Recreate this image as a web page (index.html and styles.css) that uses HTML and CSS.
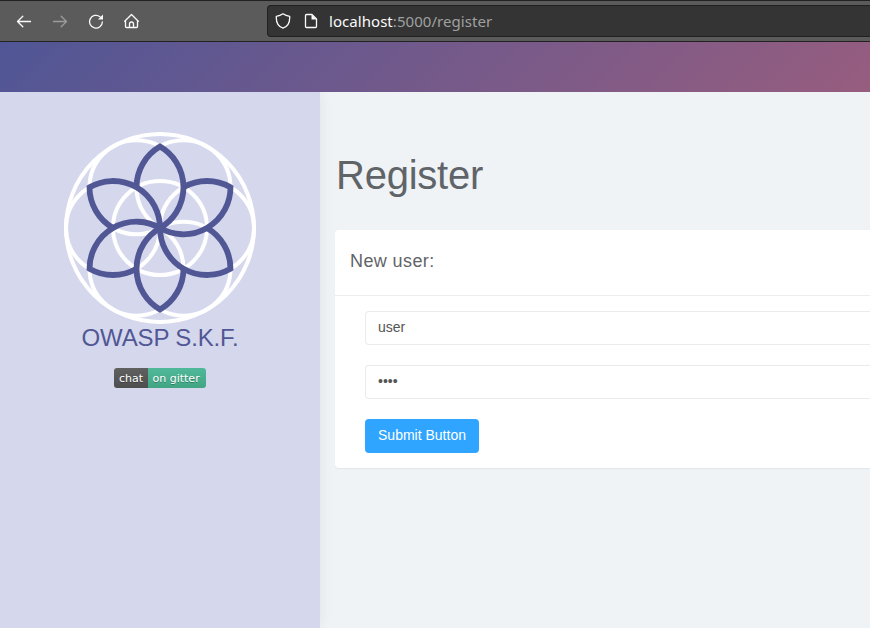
FILE: index.html
```
<!DOCTYPE html>
<html lang="en">
<head>
<meta charset="utf-8">
<title>Register</title>
<link rel="stylesheet" href="styles.css">
</head>
<body>
<div class="toolbar">
  <svg class="nav" width="16" height="16" viewBox="0 0 16 16"><path d="M14.500 8.500H1.800M6.800 3.200 1.500 8.500l5.300 5.300"/></svg>
  <svg class="nav dim" width="16" height="16" viewBox="0 0 16 16"><path d="M1.500 8.500h12.700M9.200 3.200 14.500 8.500l-5.300 5.300"/></svg>
  <svg class="nav" width="16" height="16" viewBox="0 0 16 16"><path d="M14.400 8.800A6.400 6.400 0 1 1 12 3.700"/><path class="solid" d="M15 1.500v5h-5z"/></svg>
  <svg class="nav" width="16" height="16" viewBox="0 0 16 16"><path d="M.7 8.300 7.500 1.500l6.800 6.800M1.500 7.800v5.700q0 1 1 1h10q1 0 1-1V7.800M5.500 14.500v-3.500q0-2 2-2t2 2v3.500"/></svg>
  <div class="address">
    <svg class="nav" width="16" height="16" viewBox="0 0 16 16"><path d="M8 .8Q10.800 2.900 14.700 3.300C15 9 12.500 13.700 8 15.200 3.500 13.700 1 9 1.300 3.300Q5.200 2.900 8 .8z"/></svg>
    <svg class="nav" width="16" height="16" viewBox="0 0 16 16"><path d="M3.500 1.500H9L13.500 6v7.500q0 1-1 1H3.500q-1 0-1-1V2.500q0-1 1-1z"/><path class="solid" d="M8.500 1.500v5h5z"/></svg>
    <span class="url"><b>localhost</b>:5000/register</span>
  </div>
</div>
<header class="banner"></header>
<div class="page">
  <aside class="sidebar">
    <svg class="logo" width="192" height="192" viewBox="-96 -96 192 192">
      <defs>
        <path id="petal" d="M0 0A47 47 0 0 0 0-81.400A47 47 0 0 0-23.500-40.700"/>
      </defs>
      <g class="rings">
        <circle r="94"/><circle r="47"/>
        <circle cx="47" r="47"/><circle cx="-47" r="47"/>
        <circle cx="23.500" cy="-40.700" r="47"/><circle cx="-23.500" cy="-40.700" r="47"/>
        <circle cx="23.500" cy="40.700" r="47"/><circle cx="-23.500" cy="40.700" r="47"/>
      </g>
      <g class="petals">
        <use href="#petal"/><use href="#petal" transform="rotate(60)"/><use href="#petal" transform="rotate(120)"/>
        <use href="#petal" transform="rotate(180)"/><use href="#petal" transform="rotate(240)"/><use href="#petal" transform="rotate(300)"/>
      </g>
    </svg>
    <div class="brand">OWASP S.K.F.</div>
    <div class="badge"><span class="chat">chat</span><span class="gitter">on gitter</span></div>
  </aside>
  <main class="content">
    <h1>Register</h1>
    <section class="card">
      <h2>New user:</h2>
      <form class="form">
        <input type="text" value="user" aria-label="Username">
        <input type="password" value="pass" aria-label="Password">
        <button type="button">Submit Button</button>
      </form>
    </section>
  </main>
</div>
</body>
</html>
```
FILE: styles.css
```
* { box-sizing: border-box; }
body {
  margin: 0;
  height: 628px;
  overflow: hidden;
  display: flex;
  flex-direction: column;
  background: #eff3f6;
  color: #5f6468;
  font-family: "Liberation Sans", Arial, sans-serif;
}
.toolbar {
  flex: none;
  height: 42px;
  display: flex;
  align-items: center;
  gap: 20px;
  padding-left: 16px;
  background: #5b5b5b;
  border-top: 1px solid #222;
  border-bottom: 1px solid #222;
}
.nav {
  flex: none;
  fill: none;
  stroke: #fbfbfb;
  stroke-width: 1.3;
  stroke-linecap: round;
  stroke-linejoin: round;
}
.nav .solid { fill: #fbfbfb; stroke: none; }
.dim { opacity: .4; }
.address {
  flex: 1;
  height: 32px;
  margin-left: 107px;
  padding-left: 7px;
  display: flex;
  align-items: center;
  gap: 12px;
  background: #343434;
  border: 1px solid #202020;
  border-right: 0;
  border-radius: 4px 0 0 4px;
}
.url {
  margin-left: -2px;
  font: 15px/20px "Noto Sans", sans-serif;
  letter-spacing: .05px;
  color: #a0a0a0;
}
.url b { font-weight: 400; color: #fbfbfb; }
.banner {
  flex: none;
  height: 50px;
  background: linear-gradient(135deg, #505696, #975d7f);
}
.page { flex: 1; display: flex; }
.sidebar {
  width: 320px;
  flex: none;
  display: flex;
  flex-direction: column;
  align-items: center;
  padding-top: 40px;
  background: #d5d7ed;
  box-shadow: 0 0 14px rgba(0, 0, 0, .07);
  clip-path: inset(0 -20px 0 0);
}
.rings { fill: none; stroke: #fff; stroke-width: 4; }
.petals { fill: none; stroke: #515795; stroke-width: 5.8; }
.brand {
  height: 28px;
  font-size: 24px;
  line-height: 27px;
  letter-spacing: -.15px;
  color: #515795;
}
.badge {
  margin-top: 16px;
  height: 20px;
  display: flex;
  border-radius: 3px;
  overflow: hidden;
  font: 11px/21px "DejaVu Sans", sans-serif;
  color: #fff;
  text-shadow: 0 1px 0 rgba(1, 1, 1, .3);
}
.chat { width: 34px; padding-left: 5px; background: linear-gradient(#606060, #4e4e4e); }
.gitter { width: 58px; padding-left: 4.5px; background: linear-gradient(#50b99a, #41a583); white-space: nowrap; }
.content { flex: 1; min-width: 0; padding: 59px 0 0 15px; }
h1 {
  margin: 0;
  height: 79px;
  padding-left: 1px;
  font-size: 40px;
  line-height: 48px;
  letter-spacing: -.25px;
  font-weight: 400;
}
.card {
  height: 238px;
  background: #fff;
  border-radius: 4px 0 0 4px;
  box-shadow: 0 1px 1px rgba(0, 0, 0, .05);
}
h2 {
  margin: 0;
  height: 66px;
  padding: 21px 15px;
  border-bottom: 1px solid #ebedef;
  font-size: 18px;
  line-height: 21px;
  font-weight: 400;
  letter-spacing: .4px;
}
.form {
  display: flex;
  flex-direction: column;
  gap: 20px;
  padding: 15px 0 0 30px;
}
input, button {
  height: 34px;
  font: 14px/20px "Liberation Sans", Arial, sans-serif;
}
input {
  padding: 5px 12px 7px;
  border: 1px solid #ebebeb;
  border-right: 0;
  border-radius: 4px 0 0 4px;
  background: #fff;
  color: #555;
}
button {
  align-self: flex-start;
  width: 114px;
  padding: 0 0 2px;
  border: 0;
  border-radius: 4px;
  background: #30a5ff;
  color: #fff;
}
```
